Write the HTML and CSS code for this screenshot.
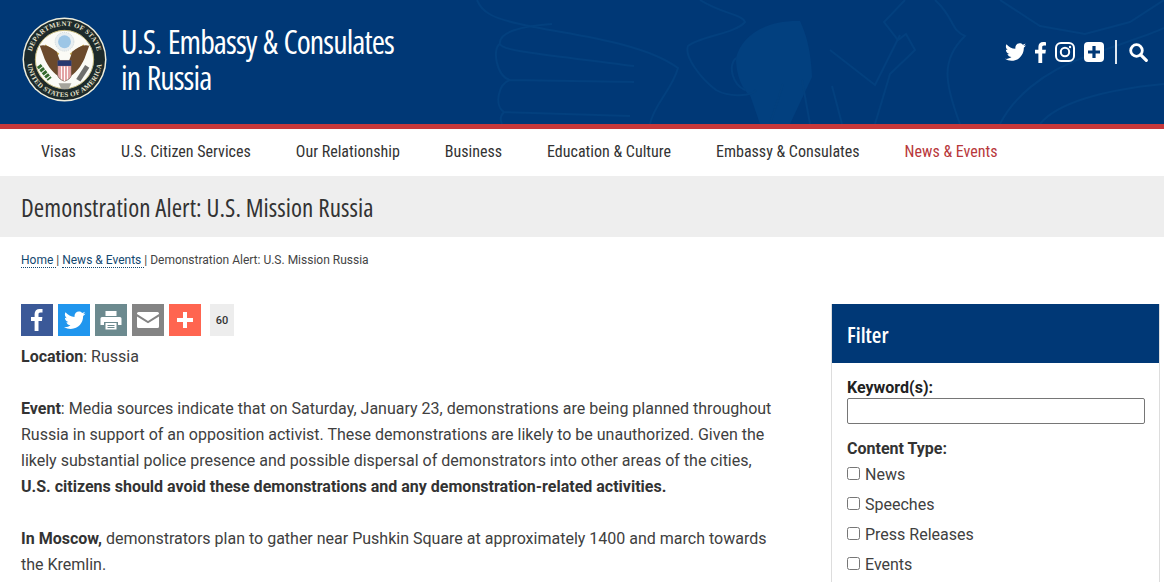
FILE: index.html
```html
<!DOCTYPE html>
<html lang="en">
<head>
<meta charset="utf-8">
<title>Demonstration Alert: U.S. Mission Russia</title>
<link rel="stylesheet" href="styles.css">
</head>
<body>
<header class="masthead">
  <svg class="watermark" viewBox="0 0 1164 124" aria-hidden="true">
    <path class="wm-body" d="M736 58C742 34 768 20 800 21C806 34 811 50 812 77L790 124H760L750 95C742 90 736 74 736 58Z"/>
    <g class="wm-line">
      <path d="M477 0C482 12 492 18 520 24C560 34 640 40 678 68C672 90 654 104 650 124"/>
      <path d="M552 24C522 26 498 32 500 44C502 52 560 56 634 66M500 44C492 48 496 76 510 80L634 82M510 80C498 84 494 106 504 112L630 116M504 112C500 116 500 120 502 124"/>
      <path d="M700 0C722 14 742 14 745 22C735 34 700 36 688 46C684 56 700 78 716 90C730 98 752 96 756 90"/>
      <path d="M736 58C728 66 732 84 745 90M770 124L783 84M810 124L802 80M842 124L832 86"/>
      <path d="M905 0L884 22L898 40L906 34L915 50L890 74L875 124M935 0C955 18 950 30 965 36C940 60 945 84 960 124"/>
      <path d="M830 50L875 85L900 35M1000 124C1012 100 1040 72 1090 55C1120 44 1150 35 1164 28M1040 124C1056 104 1100 90 1164 84"/>
      <path d="M1000 0L1040 26L1085 34L1130 22L1164 0"/>
    </g>
  </svg>
  <div class="brand">
    <svg class="seal" viewBox="0 0 86 86" aria-hidden="true">
      <circle cx="43" cy="43" r="42.500" fill="#efeedd"/>
      <circle cx="43" cy="43" r="41" fill="#1d2a2b"/>
      <circle cx="43" cy="43" r="29.500" fill="#fbfbf6" stroke="#c3b77a"/>
      <circle cx="43" cy="25" r="9.500" fill="#e7eef1" stroke="#c9d3d8" stroke-dasharray="1 1"/>
      <circle cx="43" cy="25" r="6.500" fill="#9cc6e6"/>
      <path d="M23 29L37 38M63 29L49 38" stroke="#c9ac55" stroke-width="2.500"/>
      <path d="M18 29C24 27 30 31 35 35L39 46L37 60C30 56 24 46 22 40ZM68 29C62 27 56 31 51 35L47 46L49 60C56 56 62 46 64 40Z" fill="#6b4a2c"/>
      <path d="M36 44H50V58C50 62 46 64 43 65C40 64 36 62 36 58Z" fill="#e3a3a5" stroke="#5d4a3a" stroke-width=".6"/>
      <path d="M36 44H50V49.500H36Z" fill="#26386f"/>
      <path d="M40 50V63M43 50V65M46 50V63" stroke="#fff"/>
      <path d="M17 49L28 63" stroke="#356b2e" stroke-width="5" stroke-dasharray="3 1"/>
      <path d="M66 50L57 64" stroke="#6f6f6d" stroke-width="5"/>
      <path d="M37 67H50L47 73H40Z" fill="#a5a59c"/>
      <path id="sealtop" d="M9 43A34 34 0 0 1 77 43"/>
      <path id="sealbot" d="M5 43A38 38 0 0 0 81 43"/>
      <text class="seal-text"><textPath href="#sealtop" startOffset="50%" text-anchor="middle">DEPARTMENT OF STATE</textPath></text>
      <text class="seal-text"><textPath href="#sealbot" startOffset="50%" text-anchor="middle">UNITED STATES OF AMERICA</textPath></text>
    </svg>
    <div class="site-name">U.S. Embassy &amp; Consulates<br>in Russia</div>
  </div>
  <div class="header-icons">
    <svg width="21" height="18" viewBox="0 0 24 20"><path fill="#fff" d="M21.500 5v.6C21.500 12 16.600 20 7.500 20 4.700 20 2.100 19.200 0 17.800c.4 0 .8.100 1.200.100 2.300 0 4.500-.8 6.200-2.100-2.200 0-4-1.400-4.600-3.400.3 0 .6.100 1 .100.4 0 .9-.1 1.300-.2C2.800 11.800 1 9.800 1 7.300v-.1c.7.4 1.400.6 2.200.6C1.900 7 1 5.400 1 3.700c0-.9.200-1.800.7-2.500 2.400 3 6.100 5 10.200 5.200-.1-.4-.1-.7-.1-1.100C11.800 2.300 14 0 16.700 0c1.400 0 2.700.6 3.600 1.600 1.100-.2 2.200-.6 3.100-1.200-.3 1.200-1.100 2.100-2.200 2.700 1-.1 1.900-.4 2.800-.8-.7 1-1.500 1.900-2.500 2.700z"/></svg>
    <svg width="11" height="21" viewBox="0 0 11 21"><path fill="#fff" d="M7.200 21V11.500h3.200l.5-3.700H7.200V5.400c0-1.100.3-1.800 1.800-1.800h2V.2C10.600.100 9.500 0 8.200 0 5.400 0 3.400 1.700 3.400 5v2.800H0v3.700h3.400V21z"/></svg>
    <svg width="20" height="20" viewBox="0 0 20 20"><rect x="1" y="1" width="18" height="18" rx="5" fill="none" stroke="#fff" stroke-width="2"/><circle cx="10" cy="10" r="4.200" fill="none" stroke="#fff" stroke-width="2"/><circle cx="15" cy="5" r="1.200" fill="#fff"/></svg>
    <svg width="20" height="20" viewBox="0 0 20 20"><rect width="20" height="20" rx="4" fill="#fff"/><path d="M8.400 4h3.200v4.400H16v3.200h-4.400V16H8.400v-4.400H4V8.400h4.400z" fill="#003876"/></svg>
    <span class="divider"></span>
    <svg width="19" height="19" viewBox="0 0 19 19"><circle cx="7.500" cy="7.500" r="5.800" fill="none" stroke="#fff" stroke-width="2.800"/><path d="M11.800 11.800L17.300 17.300" stroke="#fff" stroke-width="3.200" stroke-linecap="round"/></svg>
  </div>
</header>
<nav class="mainnav">
  <a>Visas</a>
  <a>U.S. Citizen Services</a>
  <a>Our Relationship</a>
  <a>Business</a>
  <a>Education &amp; Culture</a>
  <a>Embassy &amp; Consulates</a>
  <a class="active">News &amp; Events</a>
</nav>
<div class="titlebar"><h1>Demonstration Alert: U.S. Mission Russia</h1></div>
<div class="crumbs"><a>Home </a> | <a>News &amp; Events </a> | Demonstration Alert: U.S. Mission Russia</div>
<div class="content">
  <main class="article">
    <div class="share">
      <span class="sbtn fb"><svg width="32" height="32" viewBox="0 0 32 32"><path fill="#fff" d="M17.500 27V17h3.400l.5-4h-3.900v-2.500c0-1.100.4-1.900 2-1.900h2V5.100c-.4 0-1.600-.1-2.900-.1-3 0-5 1.800-5 5.100V13H10v4h3.600v10z"/></svg></span>
      <span class="sbtn tw"><svg width="32" height="32" viewBox="0 0 32 32"><path fill="#fff" d="M27.500 9.600c-.8.300-1.600.6-2.500.7.900-.6 1.600-1.400 1.900-2.500-.8.500-1.800.9-2.800 1.100-.8-.9-2-1.400-3.200-1.400-2.400 0-4.400 2-4.400 4.400 0 .3 0 .7.100 1-3.700-.2-6.900-2-9.100-4.600-.4.700-.6 1.400-.6 2.200 0 1.500.8 2.900 2 3.700-.7 0-1.400-.2-2-.5v.1c0 2.100 1.500 3.900 3.500 4.300-.4.100-.8.200-1.200.2-.3 0-.6 0-.8-.1.600 1.800 2.200 3 4.100 3-1.500 1.200-3.400 1.900-5.400 1.900-.4 0-.7 0-1.100-.1 2 1.300 4.300 2 6.700 2 8 0 12.400-6.600 12.400-12.400v-.6c.9-.6 1.600-1.300 2.400-2.400z"/></svg></span>
      <span class="sbtn pr"><svg width="32" height="32" viewBox="0 0 32 32"><path fill="#fff" d="M10.500 7h11v5h-11zM7 13h18a1.500 1.500 0 0 1 1.500 1.500V21H23v-3H9v3H5.500v-6.500A1.500 1.500 0 0 1 7 13zM10.500 19h11v6.500h-11zM12.500 21v.9h7V21zM12.500 23v.9h7V23z"/></svg></span>
      <span class="sbtn em"><svg width="32" height="32" viewBox="0 0 32 32"><path fill="#fff" d="M5 9.500A1.500 1.500 0 0 1 6.500 8h19A1.500 1.500 0 0 1 27 9.500v.6L16 17 5 10.100zM5 12.400l11 6.800 11-6.800v10.100a1.500 1.500 0 0 1-1.500 1.500h-19A1.500 1.500 0 0 1 5 22.500z"/></svg></span>
      <span class="sbtn pl"><svg width="32" height="32" viewBox="0 0 32 32"><path fill="#fff" d="M14 8h4v6h6v4h-6v6h-4v-6H8v-4h6z"/></svg></span>
      <span class="count">60</span>
    </div>
    <p class="loc"><b>Location</b>: Russia</p>
    <p><b>Event</b>: Media sources indicate that on Saturday, January 23, demonstrations are being planned throughout Russia in support of an opposition activist. These demonstrations are likely to be unauthorized. Given the likely substantial police presence and possible dispersal of demonstrators into other areas of the cities, <b>U.S. citizens should avoid these demonstrations and any demonstration-related activities.</b></p>
    <p><b>In Moscow,</b> demonstrators plan to gather near Pushkin Square at approximately 1400 and march towards the Kremlin.</p>
  </main>
  <aside class="filter">
    <div class="filter-head">Filter</div>
    <form class="filter-body">
      <label class="kw" for="kw">Keyword(s):</label>
      <input id="kw" class="kw-input" type="text">
      <div class="ct">Content Type:</div>
      <label class="opt"><input type="checkbox">News</label>
      <label class="opt"><input type="checkbox">Speeches</label>
      <label class="opt"><input type="checkbox">Press Releases</label>
      <label class="opt"><input type="checkbox">Events</label>
    </form>
  </aside>
</div>
</body>
</html>
```
FILE: styles.css
```css
* { box-sizing: border-box; }
html, body { margin: 0; height: 582px; overflow: hidden; }
body { font-family: Roboto, "Liberation Sans", sans-serif; color: #404040; background: #fff; }
.masthead { position: relative; height: 129px; background: #003876; border-bottom: 5px solid #c8383a; display: flex; justify-content: space-between; align-items: flex-start; overflow: hidden; }
.watermark { position: absolute; left: 0; top: 0; width: 1164px; height: 124px; }
.wm-body { fill: #02407f; }
.wm-line { fill: none; stroke: #03407e; stroke-width: 2; }
.brand { position: relative; display: flex; align-items: flex-start; padding: 17px 0 0 22px; }
.seal { width: 85px; height: 85px; flex: none; }
.seal path[id] { fill: none; }
.seal-text { font: 700 7px "Liberation Serif", serif; fill: #e8e4d0; letter-spacing: .35px; }
.site-name { margin: 7px 0 0 14px; font-family: "Open Sans", sans-serif; font-stretch: 75%; font-weight: 500; font-size: 32px; line-height: 36px; letter-spacing: -.93px; word-spacing: 1.500px; color: #fff; }
.header-icons { position: relative; display: flex; align-items: center; gap: 9px; padding: 40px 16px 0 0; }
.divider { width: 2px; height: 24px; background: #dfe7f0; margin: 0 3px 0 2px; }
.mainnav { display: flex; height: 47px; align-items: center; gap: 45px; padding: 0 0 2px 41px; font-family: Roboto, sans-serif; font-stretch: 75%; font-size: 16px; color: #333; }
.mainnav .active { color: #b8383b; }
.titlebar { height: 61px; background: #eee; padding-left: 21px; display: flex; align-items: center; }
.titlebar h1 { margin: 0; font-family: "Open Sans", sans-serif; font-stretch: 75%; font-weight: 500; font-size: 25px; letter-spacing: .08px; color: #333; }
.crumbs { padding: 15px 0 0 21px; height: 67px; font-size: 12px; line-height: 16px; color: #444; }
.crumbs a { color: #12476f; border-bottom: 1px dotted #12476f; }
.content { display: flex; align-items: flex-start; justify-content: space-between; padding: 0 4px 0 21px; }
.article { width: 760px; font-size: 16px; line-height: 26px; color: #404040; }
.article p { margin: 0 0 26px; }
.article b { font-weight: 700; color: #333; }
.share { display: flex; gap: 5px; height: 32px; }
.sbtn { width: 32px; height: 32px; display: block; }
.sbtn svg { display: block; }
.fb { background: #3b5998; }
.tw { background: #2096ee; }
.pr { background: #6c8a8f; }
.em { background: #848484; }
.pl { background: #ff6550; }
.count { width: 24px; height: 32px; margin-left: 4px; background: #ededed; font-size: 11px; font-weight: 500; line-height: 34px; text-align: center; color: #333; }
.article .loc { margin: 8px 0 26px; }
.filter { width: 329px; height: 290px; border: 1px solid #ddd; border-top: 0; }
.filter-head { height: 59px; background: #003876; color: #fff; font-family: "Open Sans", sans-serif; font-stretch: 75%; font-size: 22px; font-weight: 600; line-height: 61px; padding-left: 15px; }
.filter-body { padding: 15px 15px 0; display: flex; flex-direction: column; font-size: 16px; }
.kw { font-weight: 700; color: #222; line-height: 20px; }
.kw-input { width: 298px; height: 26px; margin: 0; border: 1px solid #767676; border-radius: 2px; background: #fff; }
.ct { font-weight: 700; color: #333; line-height: 20px; margin: 15px 0 0; }
.opt { display: flex; align-items: center; height: 30px; color: #404040; }
.opt input { width: 13px; height: 13px; margin: -2px 5px 0 0; }
```
